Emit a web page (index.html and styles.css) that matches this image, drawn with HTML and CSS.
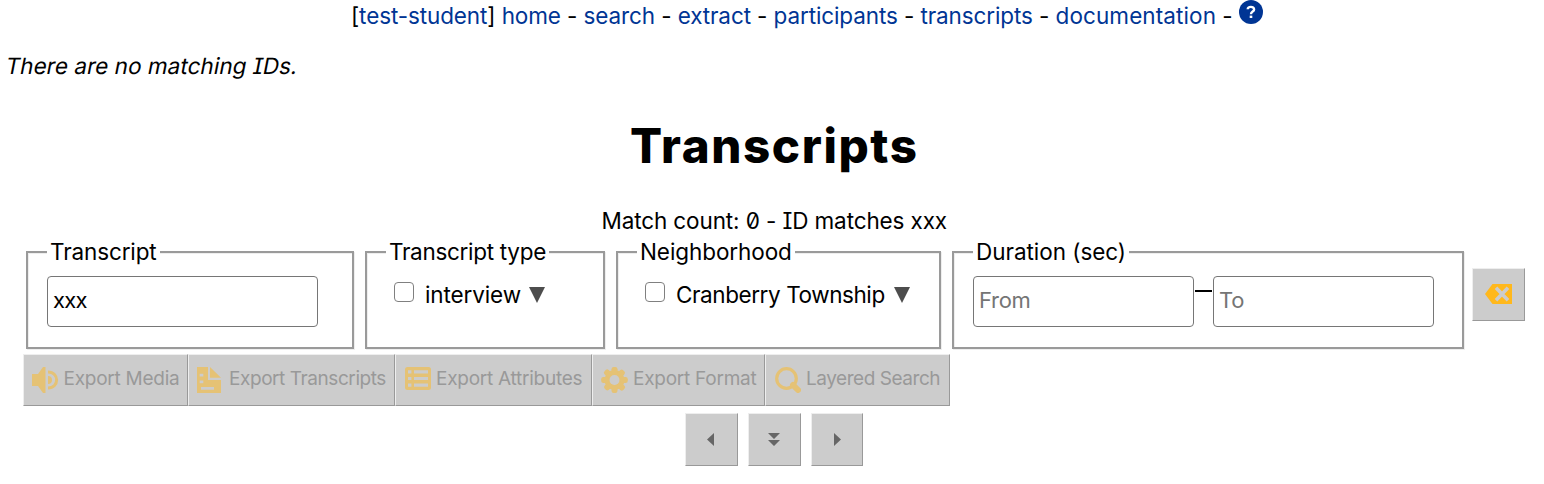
FILE: index.html
```html
<!DOCTYPE html>
<html lang="en">
<head>
<meta charset="utf-8">
<title>Transcripts</title>
<link rel="stylesheet" href="styles.css">
</head>
<body>
<nav class="menu">[<a href="#">test-student</a>] <a href="#">home</a> - <a href="#">search</a> - <a href="#">extract</a> - <a href="#">participants</a> - <a href="#">transcripts</a> - <a class="docs" href="#">documentation</a> - <svg class="help" viewBox="0 0 24 24"><circle cx="12" cy="12" r="12" fill="#003594"/><path d="M8.7 9.3C8.8 6.1 15.1 6 15.1 9.4C15.1 11.8 12 11.4 12 14.2" fill="none" stroke="#fff" stroke-width="2.4"/><rect x="10.7" y="15.6" width="2.6" height="2.4" fill="#fff"/></svg></nav>
<p class="message">There are no matching <span class="serif-i">I</span>Ds.</p>
<h1 class="title">Transcripts</h1>
<p class="count">Match count: <span class="zero">0</span> - <span class="serif-i">I</span>D matches xxx</p>
<form class="filters">
  <fieldset class="filter filter-id"><legend>Transcript</legend><input class="field field-id" type="text" value="xxx"></fieldset>
  <fieldset class="filter filter-type"><legend>Transcript type</legend><label class="option"><input class="check" type="checkbox"><span>interview</span><svg class="caret" viewBox="0 0 16 16"><path d="M0 0H16L8 16Z" fill="#4d4d4d"/></svg></label></fieldset>
  <fieldset class="filter filter-area"><legend>Neighborhood</legend><label class="option"><input class="check" type="checkbox"><span>Cranberry Township</span><svg class="caret" viewBox="0 0 16 16"><path d="M0 0H16L8 16Z" fill="#4d4d4d"/></svg></label></fieldset>
  <fieldset class="filter filter-duration"><legend>Duration (sec)</legend><div class="range"><input class="field field-num" type="text" placeholder="From"><span class="dash"></span><input class="field field-num" type="text" placeholder="To"></div></fieldset>
  <button class="square clear" type="button"><svg width="27" height="20" viewBox="0 0 27 20"><path d="M0 10L7.5 0H27V20H7.5Z" fill="#ffb81c"/><path d="M11 3.7L23 16.3M23 3.7L11 16.3" stroke="#ccc" stroke-width="3.6"/></svg></button>
</form>
<div class="exports">
  <button class="export e1" disabled><svg width="27" height="26" viewBox="0 0 27 26"><path d="M0 7H6L11 0H13.5V26H11L6 19H0Z" fill="#e5c275"/><path d="M16 5C27.5 5 27.5 21 16 21" fill="none" stroke="#e5c275" stroke-width="3"/><path d="M16 9Q20 9 20 13T16 17Z" fill="#e5c275"/></svg><span>Export Media</span></button>
  <button class="export e2" disabled><svg width="24" height="26" viewBox="0 0 24 26"><path d="M0 0H11V13H24V26H0Z M13 0L24 10.7H13Z" fill="#e5c275"/><path d="M2.7 6.7H6.3V9.5H2.7ZM2.7 13.5H6.3V16.3H2.7ZM4 20H17V22.7H4Z" fill="#ccc"/></svg><span>Export Transcripts</span></button>
  <button class="export e3" disabled><svg width="26" height="23" viewBox="0 0 26 23"><rect width="26" height="23" rx="2.5" fill="#e5c275"/><path d="M3 3.3H6.4V6.5H3ZM9 3.3H23V6.5H9ZM3 10H6.4V13H3ZM9 10H23V13H9ZM3 16.5H6.4V19.7H3ZM9 16.5H23V19.7H9Z" fill="#ccc"/></svg><span>Export Attributes</span></button>
  <button class="export e4" disabled><svg width="27" height="26" viewBox="-13.5 -13 27 26"><g fill="#e5c275"><circle r="10"/><g id="teeth"><rect x="-3" y="-13" width="6" height="26" rx="2.2"/><rect x="-13.3" y="-3" width="26.6" height="6" rx="2.2"/></g><use href="#teeth" transform="rotate(45)"/></g><circle r="5" fill="#ccc"/></svg><span>Export Format</span></button>
  <button class="export e5" disabled><svg width="26" height="26" viewBox="0 0 26 26"><circle cx="11.5" cy="11.5" r="9.8" fill="none" stroke="#e5c275" stroke-width="3.2"/><path d="M18 18L23 23" stroke="#e5c275" stroke-width="6" stroke-linecap="round"/></svg><span>Layered Search</span></button>
</div>
<div class="pager">
  <button class="square" type="button"><svg width="8" height="14" viewBox="0 0 8 14"><path d="M7 0V13L0 6.5Z" fill="#666"/></svg></button>
  <button class="square middle" type="button"><svg width="12" height="13" viewBox="0 0 12 13"><path d="M0 0H12L6 6ZM0 7H12L6 13Z" fill="#666"/></svg></button>
  <button class="square last" type="button"><svg width="8" height="14" viewBox="0 0 8 14"><path d="M1 0V13L8 6.5Z" fill="#666"/></svg></button>
</div>
</body>
</html>
```
FILE: styles.css
```css
* { box-sizing: border-box; }
body { margin: 0; width: 1544px; height: 484px; overflow: hidden; background: #fff; color: #000; font: 22.5px/30px Inter, "Liberation Sans", sans-serif; letter-spacing: -0.12px; }
p, h1 { margin: 0; }
.menu { height: 32px; padding: 0 0 0 351px; white-space: nowrap; letter-spacing: -0.11px; }
.menu a { color: #003594; text-decoration: none; }
.menu .docs { letter-spacing: 0.1px; }
.help { width: 24px; height: 24px; vertical-align: 0; }
.message { padding: 19px 0 0 4.5px; transform: skewX(-11deg); transform-origin: 0 42px; letter-spacing: 0.04px; }
.serif-i { font-feature-settings: "cv08"; }
.zero { font-feature-settings: "zero"; }
.title { margin-top: 35px; padding-left: 630px; font-size: 47.5px; line-height: 60px; font-weight: 850; letter-spacing: 1.6px; }
.count { margin-top: 30px; padding-left: 601.5px; }
.filters { display: flex; padding-left: 26px; }
.filter { min-width: 0; height: 113px; margin: 0 11px 0 0; padding: 8px 19px 0; border: 2px solid #9a9a9a; box-shadow: 1px 1px 0 #eee, inset 1px 1px 0 #eee; }
.filter legend { padding: 0 3px; background: #fff; line-height: 32px; white-space: nowrap; }
.filter-id { width: 328px; }
.filter-type { width: 240px; }
.filter-type legend { letter-spacing: -0.3px; }
.filter-area { width: 325px; }
.filter-area legend { letter-spacing: -0.08px; }
.filter-area .option { letter-spacing: -0.42px; }
.filter-area .caret { margin-left: 9.5px; }
.filter-duration { width: 512px; margin-right: 8px; }
.filter-duration legend { letter-spacing: -0.04px; }
.field { display: block; height: 51px; padding: 0 6px 3px; border: 1px solid #767676; border-radius: 4px; background: #fff; font: 22px Inter, sans-serif; }
.field-id { width: 271px; padding-left: 5px; letter-spacing: -0.8px; }
.field-num { width: 221px; padding-left: 5px; letter-spacing: -0.3px; }
.range { display: flex; }
.dash { width: 17px; height: 2px; margin: 14px 1px 0; background: #000; }
.option { display: flex; padding: 4px 0 0 8px; white-space: nowrap; }
.check { width: 20px; height: 20px; margin: 2px 11px 0 0; appearance: none; border: 1.5px solid #808080; border-radius: 4px; }
.caret { width: 16px; height: 16px; margin: 7px 0 0 8.5px; }
.square { display: flex; align-items: center; justify-content: center; width: 53px; height: 53px; padding: 0 1px 1px 0; border: 1px solid; border-color: #eee #999 #999 #eee; background: #ccc; }
.clear { margin-top: 32px; padding-right: 0; }
.exports { display: flex; margin: 5px 0 0 23px; }
.export { display: flex; height: 52px; padding: 12px 0 0 8px; border: 1px solid; border-color: #eee #999 #999 #eee; background: #ccc; color: #999; font: 19px/24px Inter, sans-serif; letter-spacing: -0.25px; white-space: nowrap; }
.export span { margin-left: 5px; }
.e1 { width: 165px; }
.e1 span { margin-left: 4.5px; }
.e2 { width: 207px; letter-spacing: -0.43px; }
.e2 span { margin-left: 8px; }
.e3 { width: 197px; padding-left: 9px; }
.e4 { width: 173px; }
.e5 { width: 185px; padding-left: 9px; letter-spacing: -0.45px; }
.pager { display: flex; gap: 10px; margin: 7px 0 0 685px; }
.pager .square { padding: 1px 1px 0 0; }
.pager .middle { padding: 0 1px 1px 0; }
.pager .last { width: 52px; padding: 1px 0 0; }
```
